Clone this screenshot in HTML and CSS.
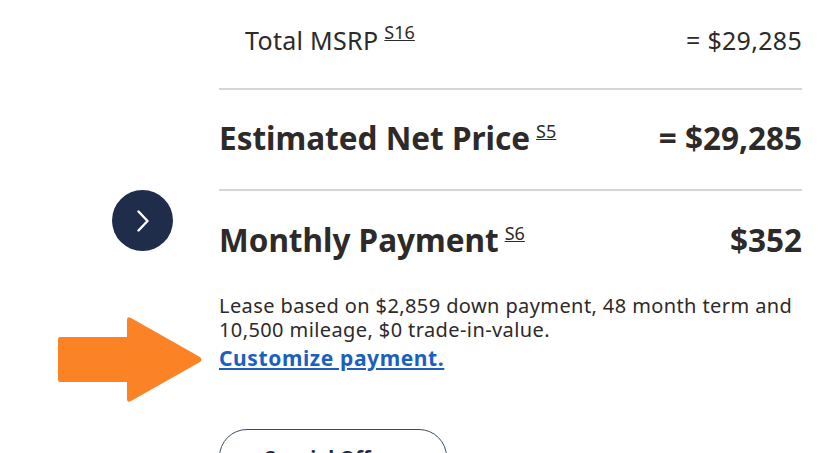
FILE: index.html
```html
<!DOCTYPE html>
<html lang="en">
<head>
  <meta charset="UTF-8" />
  <meta name="viewport" content="width=device-width, initial-scale=1.0">
  <title>Pricing</title>
  <link rel="stylesheet" href="styles.css">
</head>
<body>
  <div class="page">
    <button class="next-btn" aria-label="Next">
      <svg width="20" height="22" viewBox="0 0 20 22"><path d="M5.5 1.5 L14.5 11 L5.5 20.5" fill="none" stroke="#fff" stroke-width="2.4" stroke-linecap="round" stroke-linejoin="round"/></svg>
    </button>

    <svg class="arrow" width="146" height="90" viewBox="0 0 146 90">
      <path d="M3 21 H70 V4 Q70 0 74 2 L143 41 Q146 44 143 46 L74 85 Q70 87 70 83 V66 H3 Q1 66 1 63 V24 Q1 21 3 21 Z" fill="#fb8326"/>
    </svg>

    <div class="summary">
      <div class="row row-msrp">
        <span class="label">Total MSRP<sup><a href="#">S16</a></sup></span>
        <span class="value">= $29,285</span>
      </div>
      <div class="row row-big row-net">
        <span class="label">Estimated Net Price<sup><a href="#">S5</a></sup></span>
        <span class="value">= $29,285</span>
      </div>
      <div class="row row-big row-last">
        <span class="label">Monthly Payment<sup><a href="#">S6</a></sup></span>
        <span class="value">$352</span>
      </div>
      <p class="note">Lease based on $2,859 down payment, 48 month term and 10,500 mileage, $0 trade-in-value.</p>
      <div class="customize-wrap"><a href="#" class="customize">Customize payment.</a></div>
      <button class="offers-btn">Special Offers</button>
    </div>
  </div>
</body>
</html>
```

FILE: styles.css
```css
* {
  box-sizing: border-box;
}
body {
  margin: 0;
  background: #fff;
  font-family: 'Noto Sans', 'Open Sans', sans-serif;
  color: #2d2a29;
  overflow: hidden;
}
.page {
  position: relative;
  height: 453px;
  padding-left: 219px;
}
.summary {
  width: 583px;
}
.row {
  display: flex;
  justify-content: space-between;
  align-items: baseline;
  border-bottom: 2px solid #d6d6d6;
}
.row-msrp {
  padding: 25px 0 33px 26px;
  font-size: 25px;
  line-height: 30px;
  letter-spacing: 0.3px;
}
.row-big {
  font-size: 31.5px;
  line-height: 40px;
  font-weight: 700;
}
.row-net {
  padding: 28px 0 31px 0;
}
.row-last {
  border-bottom: none;
  padding: 29px 0 34px 0;
}
.label sup {
  font-size: 18px;
  font-weight: 400;
  margin-left: 6px;
  vertical-align: 12px;
  line-height: 0;
  letter-spacing: 0;
}
.row-msrp .label sup {
  vertical-align: 11px;
}
.label sup a {
  color: #2d2a29;
}
.note {
  margin: 0;
  font-size: 20px;
  line-height: 24px;
  letter-spacing: 0.4px;
}
.customize-wrap {
  margin-top: 4px;
  font-size: 21px;
  line-height: 24px;
  letter-spacing: 0.6px;
}
.customize {
  color: #1b5fc1;
  font-weight: 700;
}
.offers-btn {
  display: block;
  margin-top: 59px;
  width: 228px;
  height: 56px;
  border: 1px solid #3b4b66;
  border-radius: 28px;
  background: #fff;
  font-family: inherit;
  font-size: 20px;
  font-weight: 700;
  color: #1f2d4a;
  padding: 0;
}
.next-btn {
  position: absolute;
  left: 112px;
  top: 190px;
  width: 61px;
  height: 61px;
  border-radius: 50%;
  border: none;
  background: #1f2d4a;
  display: flex;
  align-items: center;
  justify-content: center;
  padding: 0;
}
.arrow {
  position: absolute;
  left: 57px;
  top: 316px;
}
```
